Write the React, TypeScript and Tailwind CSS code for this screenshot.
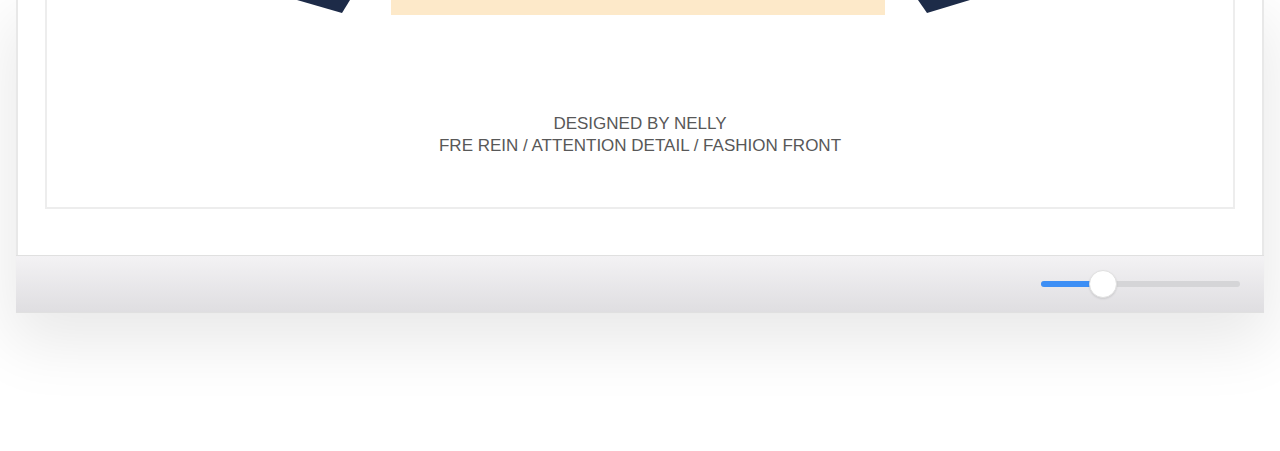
import React from 'react';

function PosterBottom() {
  // only the lower edge of the poster art is visible in the scrolled view
  return (
    <svg width="1186" height="15" viewBox="0 0 1186 15" className="block">
      <polygon points="250,0 303,0 295,13" fill="#1d2b48" />
      <rect x="344" y="0" width="494" height="15" fill="#fde9c9" />
      <polygon points="871,0 923,0 880,13" fill="#1d2b48" />
    </svg>
  );
}

function ZoomSlider({ value }: { value: number }) {
  return (
    <div className="relative h-[28px] w-[199px] flex items-center">
      <div className="h-[6px] w-full rounded-full bg-[#d5d5d7]" />
      <div
        className="absolute left-0 h-[6px] rounded-full bg-[#3d8ff5]"
        style={{ width: `${value * 199}px` }}
      />
      <div
        className="absolute h-[28px] w-[28px] rounded-full bg-white border border-[#e0e0e0] shadow-[0_1px_2px_rgba(0,0,0,0.1)]"
        style={{ left: `${value * 199 - 14}px` }}
      />
    </div>
  );
}

export default function App() {
  return (
    <div className="h-[451px] w-[1280px] overflow-hidden bg-white" style={{ fontFamily: '"Liberation Sans", Arial, sans-serif' }}>
      <div className="ml-[16px] w-[1248px] bg-white shadow-[0_24px_60px_6px_rgba(0,0,0,0.09)]">
        <div className="border-x-2 border-[#e8e8e8] px-[27px] pb-[46px]">
          <div className="border-x-2 border-b-2 border-[#ededed] pb-[50px]">
            <PosterBottom />
            <div className="mt-[98px] text-center text-[17px] leading-[22px] text-[#585858]">
              <div>DESIGNED BY NELLY</div>
              <div>FRE REIN / ATTENTION DETAIL / FASHION FRONT</div>
            </div>
          </div>
        </div>
        <div className="h-[58px] border-t border-b border-[#e0e0e0] bg-gradient-to-b from-[#f3f2f4] to-[#dfdee1] flex items-center justify-end pr-[24px]">
          <ZoomSlider value={0.31} />
        </div>
      </div>
    </div>
  );
}
